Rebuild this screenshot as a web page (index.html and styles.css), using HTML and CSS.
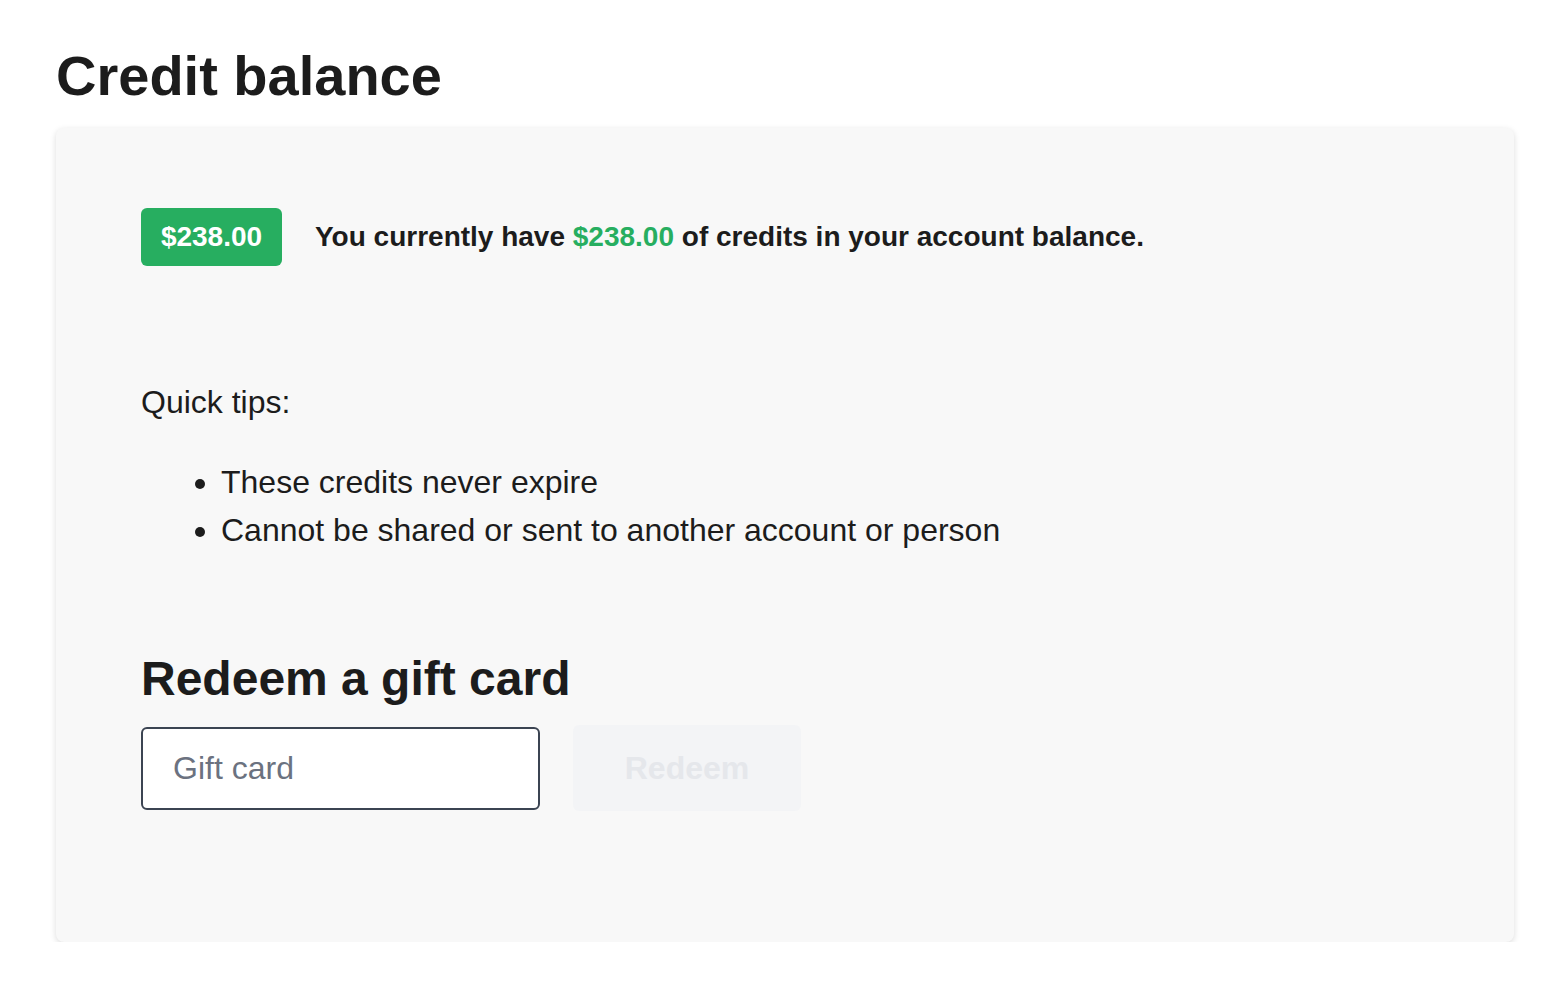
FILE: index.html
```html
<!DOCTYPE html>
<html lang="en">
<head>
<meta charset="utf-8">
<title>Credit balance</title>
<link rel="stylesheet" href="styles.css">
</head>
<body>
<main class="page">
  <h1 class="page-title">Credit balance</h1>
  <section class="card">
    <div class="balance-row">
      <span class="badge">$238.00</span>
      <p class="balance-text">You currently have <span class="amount">$238.00</span> of credits in your account balance.</p>
    </div>
    <p class="tips-title">Quick tips:</p>
    <ul class="tips">
      <li>These credits never expire</li>
      <li>Cannot be shared or sent to another account or person</li>
    </ul>
    <h2 class="redeem-title">Redeem a gift card</h2>
    <form class="redeem-form">
      <input class="gift-input" type="text" placeholder="Gift card">
      <button class="redeem-btn" type="button" disabled>Redeem</button>
    </form>
  </section>
</main>
</body>
</html>
```

FILE: styles.css
```css
* { box-sizing: border-box; }
html, body { margin: 0; padding: 0; background: #ffffff; }
body {
  font-family: "Liberation Sans", Arial, Helvetica, sans-serif;
  color: #1c1c1c;
}
.page {
  padding: 40px 52px 0 56px;
}
.page-title {
  margin: 0 0 16px 0;
  font-size: 56px;
  line-height: 72px;
  font-weight: 700;
}
.card {
  background: #f8f8f8;
  border-radius: 8px;
  box-shadow: 0 2px 6px rgba(0,0,0,0.14);
  padding: 80px 85px 130px 85px;
  min-height: 814px;
}
.balance-row {
  display: flex;
  align-items: center;
  gap: 33px;
}
.badge {
  display: inline-flex;
  align-items: center;
  justify-content: center;
  height: 58px;
  width: 141px;
  background: #27ae60;
  color: #ffffff;
  border-radius: 6px;
  font-size: 28px;
  font-weight: 700;
}
.balance-text {
  margin: 0;
  font-size: 28px;
  font-weight: 700;
}
.amount { color: #27ae60; }
.tips-title {
  margin: 112px 0 32px 0;
  font-size: 32px;
  line-height: 48px;
}
.tips {
  margin: 0;
  padding-left: 80px;
  font-size: 32px;
  line-height: 48px;
}
.redeem-title {
  margin: 97px 0 18px 0;
  font-size: 48px;
  line-height: 56px;
  font-weight: 700;
}
.redeem-form {
  display: flex;
  align-items: center;
  gap: 33px;
}
.gift-input {
  width: 399px;
  height: 83px;
  border: 2px solid #3b4452;
  border-radius: 6px;
  background: #ffffff;
  padding: 0 30px;
  font-family: inherit;
  font-size: 32px;
  color: #1c1c1c;
}
.gift-input::placeholder { color: #6b7280; }
.redeem-btn {
  width: 228px;
  height: 86px;
  border: none;
  border-radius: 6px;
  background: #f3f4f6;
  color: #e5e7eb;
  font-family: inherit;
  font-size: 32px;
  font-weight: 700;
}
```
